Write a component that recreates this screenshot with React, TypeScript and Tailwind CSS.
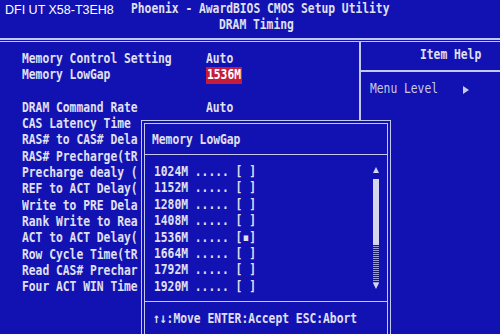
const mono = "font-['DejaVu_Sans_Mono','Liberation_Mono',monospace] font-bold";

function Ln({
  children,
  className = "",
}: {
  children?: React.ReactNode;
  className?: string;
}) {
  return (
    <div className={"h-[16.3px] whitespace-pre leading-[16.3px] " + className}>
      <span className="inline-block origin-center scale-y-[1.25] leading-[12px]">{children}</span>
    </div>
  );
}

// lower rows are cut where the popup starts, as on the screen
const rows: { label: string; value?: string; hot?: boolean }[] = [
  { label: "Memory Control Setting", value: "Auto" },
  { label: "Memory LowGap", value: "1536M", hot: true },
  { label: "" },
  { label: "DRAM Command Rate", value: "Auto" },
  { label: "CAS Latency Time" },
  { label: "RAS# to CAS# Dela" },
  { label: "RAS# Precharge(tR" },
  { label: "Precharge dealy (" },
  { label: "REF to ACT Delay(" },
  { label: "Write to PRE Dela" },
  { label: "Rank Write to Rea" },
  { label: "ACT to ACT Delay(" },
  { label: "Row Cycle Time(tR" },
  { label: "Read CAS# Prechar" },
  { label: "Four ACT WIN Time" },
];

const sizes = ["1024M", "1152M", "1280M", "1408M", "1536M", "1664M", "1792M", "1920M"];

function Arrow({ down = false }: { down?: boolean }) {
  return (
    <svg width="6" height="6" viewBox="0 0 6 6" className="block">
      <polygon points={down ? "0,0 6,0 3,6" : "3,0 6,6 0,6"} fill="#d4d6ee" />
    </svg>
  );
}

export default function App() {
  return (
    <div
      className={
        "relative h-[334px] w-[500px] overflow-hidden bg-[#1212b2] text-[11.3px] text-[#e0e0f0] " +
        mono
      }
    >
      {/* camera watermark */}
      <div className="absolute left-[5px] top-[1px] font-['Liberation_Sans',Arial,sans-serif] text-[12.5px] font-normal text-white">
        DFI UT X58-T3EH8
      </div>

      <header className="h-[38px] pt-[1px]">
        <Ln className="pl-[131px]">Phoenix - AwardBIOS CMOS Setup Utility</Ln>
        <Ln className="pl-[219px]">DRAM Timing</Ln>
      </header>
      <div className="h-[4px] border-t-2 border-b border-[#c4c8ec]" />

      <div className="flex h-[292px]">
        <div className="w-[361px] border-r-2 border-[#c4c8ec] pl-[22px] pt-[9px]">
          {rows.map((r, i) => (
            <div key={i} className="flex">
              <Ln className="w-[184px]">{r.label}</Ln>
              {r.value ? (
                <Ln className={r.hot ? "bg-[#c41c3a] px-[1px] text-white" : ""}>{r.value}</Ln>
              ) : null}
            </div>
          ))}
        </div>
        <div className="flex-1">
          <div className="h-[30px] border-b-2 border-[#c4c8ec] pl-[59px] pt-[5px]">
            <Ln>Item Help</Ln>
          </div>
          <div className="flex items-center pl-[9px] pt-[9px] font-normal text-[#c8cae6]">
            <Ln>Menu Level</Ln>
            <svg width="6" height="8" viewBox="0 0 6 8" className="ml-[25px] mt-[1px]">
              <polygon points="0,0 6,4 0,8" fill="#c8cae6" />
            </svg>
          </div>
        </div>
      </div>

      {/* popup list */}
      <div className="absolute left-[141px] top-[120px] h-[230px] w-[250px] border border-[#c4c8ec] bg-[#1212b2] p-[2px]">
        <div className="flex h-full flex-col border border-[#c4c8ec]">
          <div className="h-[31px] border-b border-[#c4c8ec] pl-[7px] pt-[8px]">
            <Ln>Memory LowGap</Ln>
          </div>
          <div className="flex h-[147px] border-b border-[#c4c8ec]">
            <div className="w-[228px] pl-[9px] pt-[9px]">
              {sizes.map((s) => (
                <Ln key={s} className="h-[16.4px]">
                  {s + " ..... " + (s === "1536M" ? "[▪]" : "[ ]")}
                </Ln>
              ))}
            </div>
            <div className="flex w-[6px] flex-col pt-[12px]">
              <Arrow />
              <div className="mt-[6px] h-[66px] bg-[#d4d6ee]" />
              <div className="h-[38px] bg-[repeating-linear-gradient(0deg,#9a9cd8_0px,#9a9cd8_1px,transparent_1px,transparent_2px)]" />
              <Arrow down />
            </div>
          </div>
          <div className="pl-[8px] pt-[9px]">
            <Ln>↑↓:Move ENTER:Accept ESC:Abort</Ln>
          </div>
        </div>
      </div>
    </div>
  );
}
